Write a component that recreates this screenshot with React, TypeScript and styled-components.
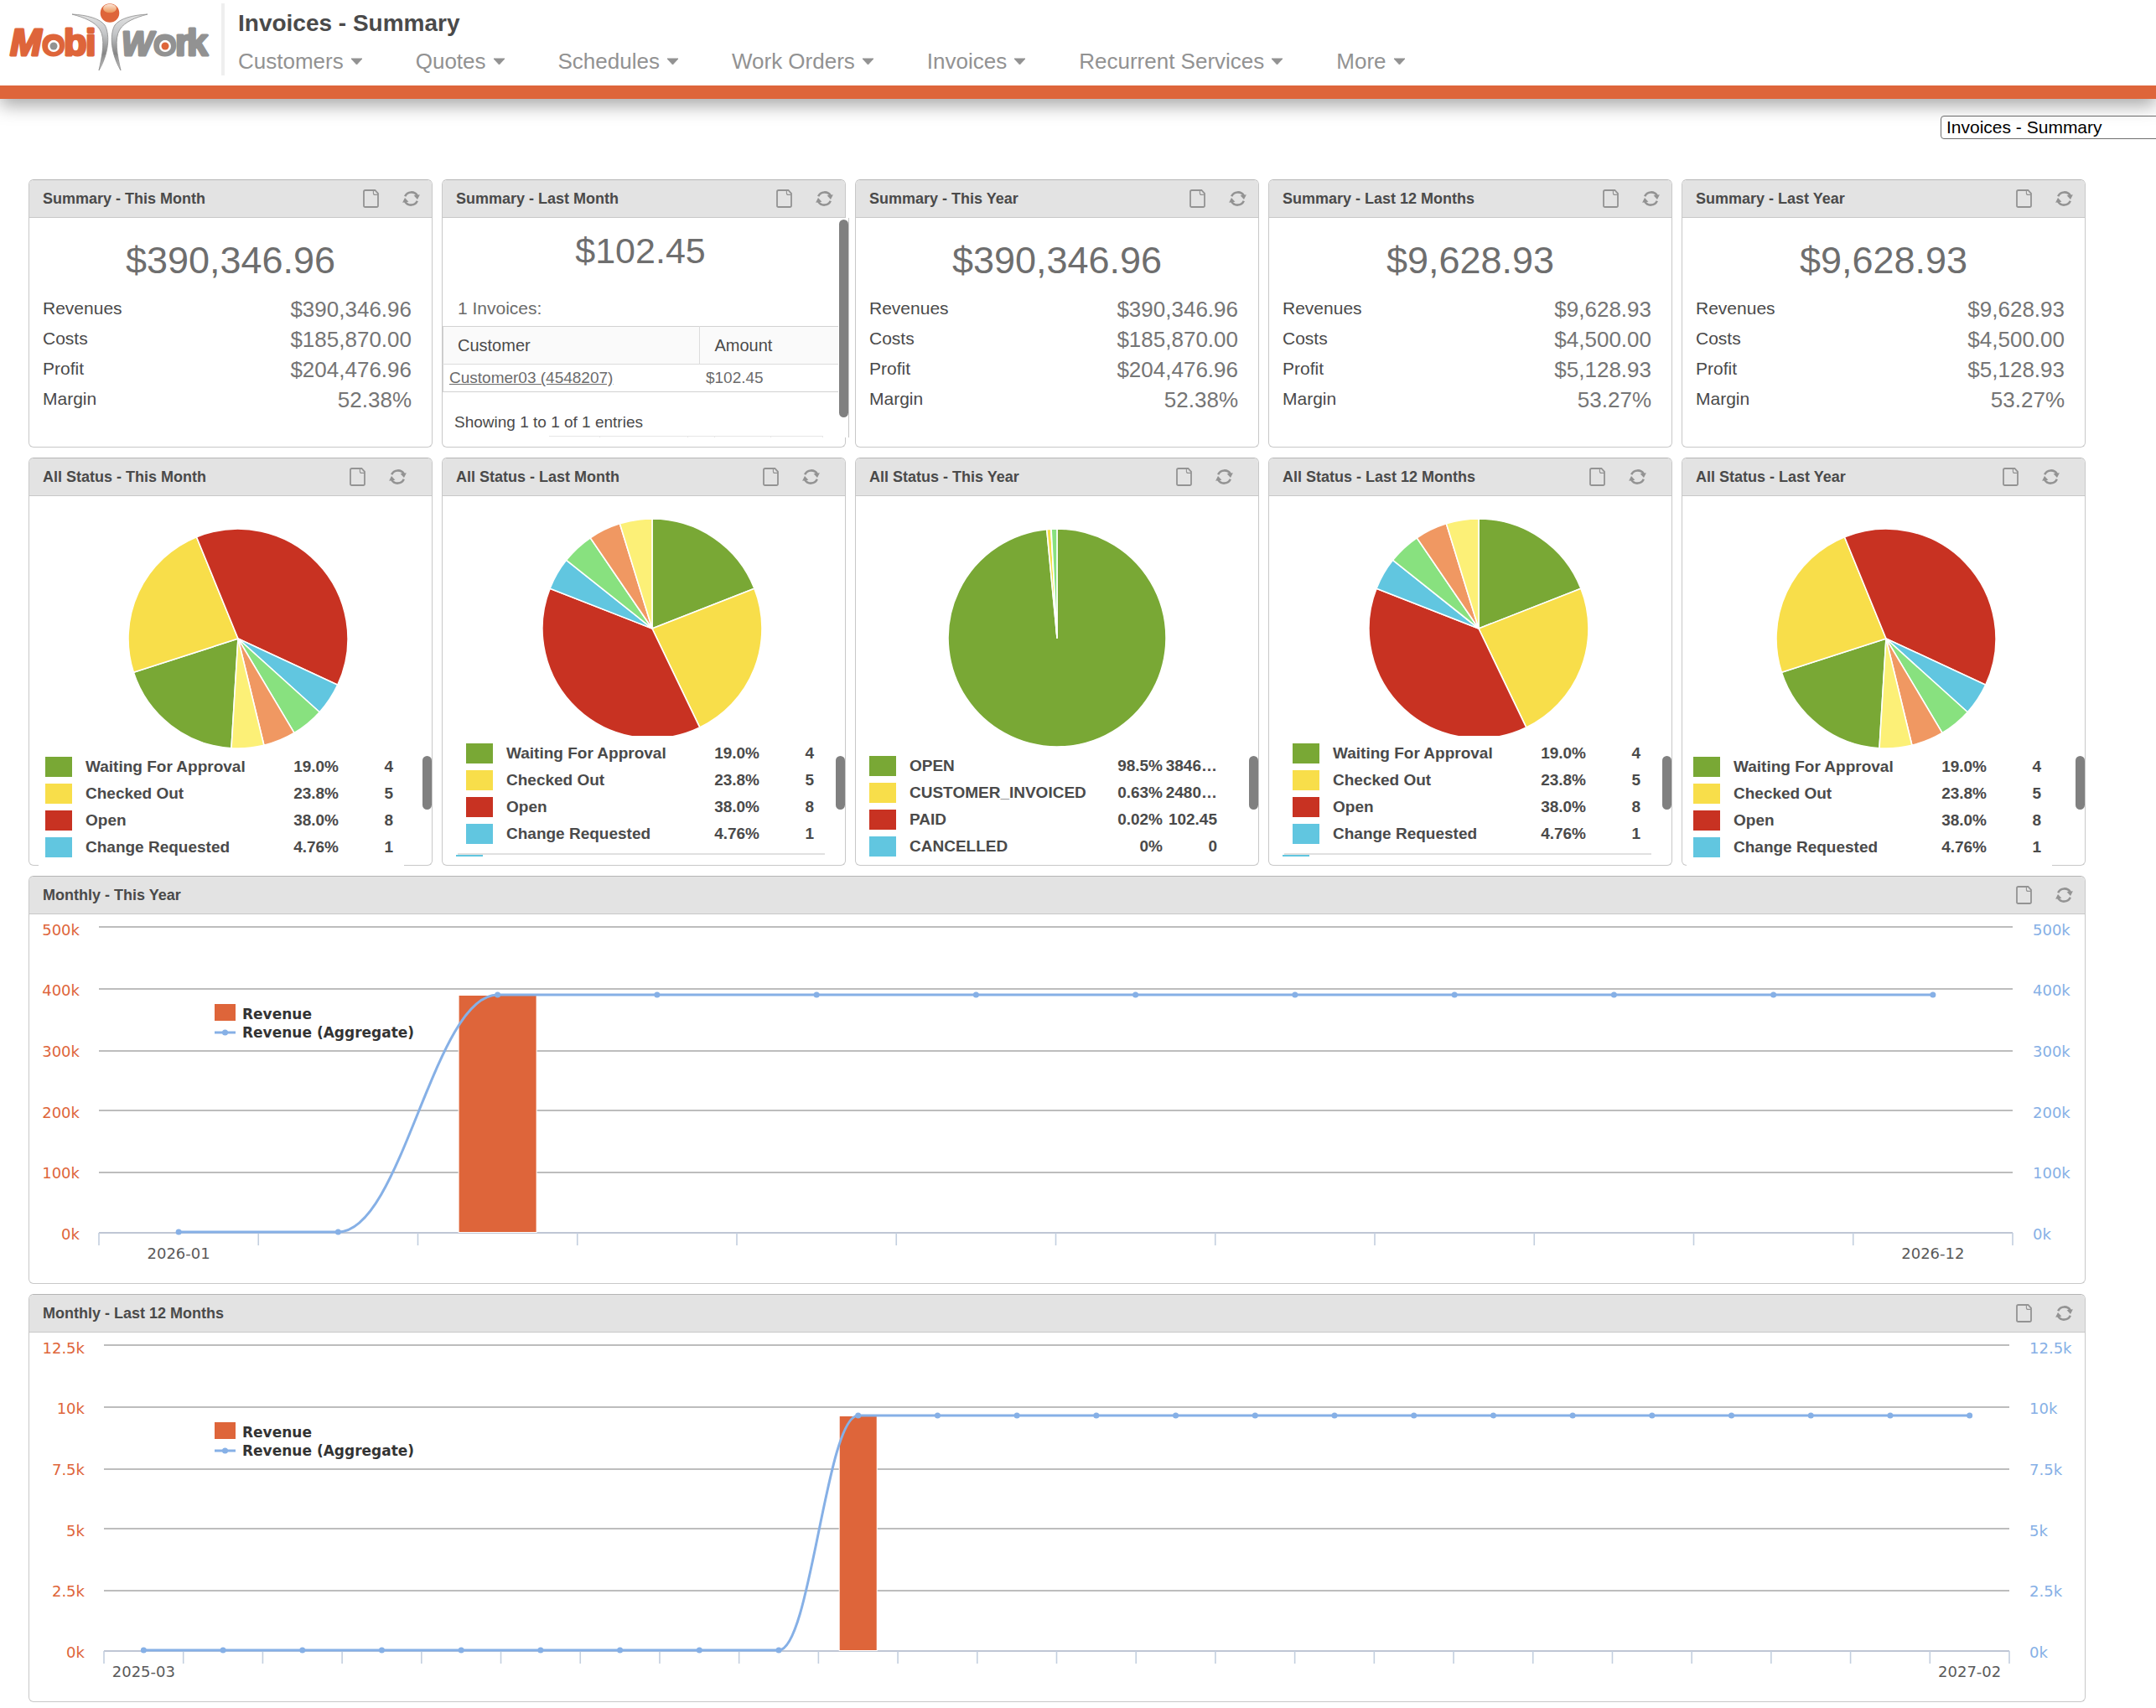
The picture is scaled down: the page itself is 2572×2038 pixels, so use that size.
import React from "react";
import styled, { createGlobalStyle } from "styled-components";

const ORANGE = "#de653a";
const BLUE = "#86b0e6";
const LINE = "#c8c8c8";

const GlobalStyle = createGlobalStyle`
  *, *::before, *::after { box-sizing: border-box; }
  body {
    margin: 0;
    overflow-x: hidden;
    background: #fff;
    color: #4a4a4a;
    font-family: "Liberation Sans", Arial, Helvetica, sans-serif;
  }
`;

/* ---------- header ---------- */

const Header = styled.header`
  position: relative;
  display: flex;
  height: 118px;
  background: #fff;
  border-bottom: 16px solid ${ORANGE};
  box-shadow: 0 8px 20px rgba(0, 0, 0, 0.34);
`;

const LogoLink = styled.a`
  display: block;
  width: 264px;
  flex: none;
`;

const Divider = styled.span`
  width: 4px;
  height: 86px;
  margin-top: 4px;
  background: #efefef;
`;

const HeaderText = styled.div`
  padding: 10px 0 0 16px;
`;

const PageTitle = styled.h1`
  margin: 0 0 9px;
  font-size: 28px;
  line-height: 36px;
  color: #4a4a4a;
`;

const Nav = styled.nav`
  display: flex;
  gap: 63px;
`;

const NavButton = styled.button`
  display: flex;
  align-items: center;
  gap: 8px;
  padding: 0;
  border: 0;
  background: none;
  font: inherit;
  font-size: 26px;
  line-height: 36px;
  color: #929292;
  white-space: nowrap;
`;

const Toolbar = styled.div`
  display: flex;
  justify-content: flex-end;
  padding-top: 20px;
  margin-right: -60px;
`;

const ReportSelect = styled.select`
  appearance: none;
  width: 317px;
  height: 28px;
  padding: 0 6px;
  border: 1px solid #6f6f6f;
  border-radius: 4px;
  background: #fff;
  font: inherit;
  font-size: 21px;
  line-height: 26px;
  color: #000;
`;

/* ---------- cards ---------- */

const Dashboard = styled.main`
  display: grid;
  grid-template-columns: repeat(5, minmax(0, 1fr));
  gap: 12px 11px;
  padding: 48px 84px 4px 34px;
`;

const Card = styled.section<{ $wide?: boolean }>`
  display: flex;
  flex-direction: column;
  grid-column: ${(p) => (p.$wide ? "1 / -1" : "auto")};
  border: 1px solid ${LINE};
  border-top-color: #b5b5b5;
  border-radius: 6px;
  background: #fff;
`;

const CardHeader = styled.header<{ $inset?: boolean }>`
  display: flex;
  align-items: center;
  height: 45px;
  padding: 0 ${(p) => (p.$inset ? 30 : 14)}px 0 16px;
  gap: 28px;
  border-bottom: 1px solid ${LINE};
  border-radius: 5px 5px 0 0;
  background: #e3e3e3;
`;

const CardTitle = styled.h2`
  flex: 1;
  margin: 0;
  font-size: 18px;
  line-height: 24px;
  color: #4a4a4a;
`;

const IconButton = styled.button`
  display: flex;
  padding: 0;
  border: 0;
  background: none;
`;

const SummaryBody = styled.div`
  padding: 25px 24px 38px 16px;
`;

const Total = styled.p`
  margin: 0 0 14px;
  padding-left: 8px;
  font-size: 45px;
  line-height: 52px;
  text-align: center;
  color: #6e6e6e;
`;

const Figures = styled.dl`
  margin: 0;
`;

const Figure = styled.div`
  display: flex;
  align-items: center;
  justify-content: space-between;
  height: 36px;
  dt {
    padding-bottom: 2px;
    font-size: 21px;
    line-height: 34px;
  }
  dd {
    margin: 0;
    font-size: 26px;
    line-height: 36px;
    color: #757575;
  }
`;

const DetailBody = styled.div`
  position: relative;
  height: 262px;
  margin-right: -5px;
  padding-right: 12px;
  border-right: 1px solid ${LINE};
  background: #fff;
  overflow: hidden;
`;

const DetailTotal = styled(Total)`
  margin: 0 0 20px;
  padding: 13px 0 0;
  font-size: 43px;
`;

const DetailCount = styled.p`
  margin: 0;
  padding: 5px 0 3px 18px;
  font-size: 21px;
  line-height: 36px;
  color: #6b6b6b;
`;

const DetailTable = styled.table`
  width: 100%;
  border-collapse: collapse;
  border: 1px solid #d2d2d2;
  border-right: 0;
  font-size: 19px;
  text-align: left;
  th {
    height: 45px;
    padding: 0 17px;
    border-bottom: 1px solid #dcdcdc;
    background: #fafafa;
    font-size: 20px;
    font-weight: 400;
  }
  th + th {
    border-left: 1px solid #dcdcdc;
  }
  td {
    height: 33px;
    padding: 0 7px;
    color: #6b6b6b;
  }
`;

const CustomerLink = styled.a`
  color: inherit;
  text-decoration: underline;
`;

const Entries = styled.p`
  margin: 0;
  padding: 24px 0 4px 14px;
  font-size: 19px;
  line-height: 24px;
`;

const Pager = styled.div`
  display: grid;
  grid-template-columns: 61px 105px 32px 67px 62px;
  justify-content: end;
  padding-right: 18px;
  span {
    height: 20px;
    border: 1px solid #e6e6e6;
    border-left-width: 0;
  }
`;

const ScrollThumb = styled.span<{ $top: number; $length: number }>`
  position: absolute;
  top: ${(p) => p.$top}px;
  right: 0;
  width: 11px;
  height: ${(p) => p.$length}px;
  border-radius: 6px;
  background: #808080;
`;

/* ---------- status cards ---------- */

const StatusBody = styled.div`
  position: relative;
  padding-bottom: 5px;
`;

const PieArea = styled.div<{ $height: number; $left: number }>`
  display: flex;
  align-items: flex-end;
  height: ${(p) => p.$height}px;
  padding: 0 0 5px ${(p) => p.$left}px;
  svg { display: block; }
`;

const Legend = styled.ul<{ $left: number }>`
  margin: 0 0 0 ${(p) => p.$left}px;
  padding: 0;
  list-style: none;
`;

const LegendRow = styled.li`
  display: grid;
  grid-template-columns: 32px 254px 64px 65px;
  align-items: center;
  height: 32px;
  font-size: 19px;
  font-weight: 700;
  white-space: nowrap;
`;

const Swatch = styled.span<{ $color: string }>`
  height: 24px;
  background: ${(p) => p.$color};
`;

const LegendName = styled.span`
  padding-left: 16px;
`;

const LegendNumber = styled.span`
  text-align: right;
`;

const LegendEnd = styled.div`
  width: 438px;
  margin: 7px 0 0 18px;
  border-top: 2px solid #e0e0e0;
`;

const NextSwatch = styled.div`
  width: 32px;
  height: 2px;
  margin: 0 0 5px 16px;
  background: #61c6e0;
`;

const FooterCover = styled.span<{ $left: number }>`
  position: absolute;
  left: ${(p) => p.$left}px;
  bottom: -1px;
  width: 436px;
  height: 4px;
  background: #fff;
`;

const ChartSvg = styled.svg`
  display: block;
  width: 100%;
  height: auto;
  font-family: "DejaVu Sans", Verdana, sans-serif;
  font-size: 18px;
`;

/* ---------- drawings ---------- */

const arm =
  "M86 17 C104 18 119 22 125 30 C130 38 132 60 118 84 C122 66 126 46 119 35 C113 26 101 21 86 17 Z";

function Logo() {
  return (
    <svg width="264" height="100" viewBox="0 0 264 100" role="img" aria-label="MobiWork">
      <defs>
        <linearGradient id="body" x1="0" y1="0" x2="0" y2="1">
          <stop offset="0" stopColor="#e2e2e2" />
          <stop offset="0.35" stopColor="#c4c6c8" />
          <stop offset="0.7" stopColor="#868686" />
          <stop offset="1" stopColor="#c8c8c8" />
        </linearGradient>
        <linearGradient id="shine" x1="0" y1="0" x2="0" y2="1">
          <stop offset="0" stopColor="#fbe6d8" />
          <stop offset="1" stopColor="#eb9455" />
        </linearGradient>
      </defs>
      <g
        fontFamily="Liberation Sans, Arial, sans-serif"
        fontWeight="700"
        fontSize="45"
        strokeWidth="3"
        strokeLinejoin="round"
      >
        <text y="66" x="12 50 76 102" fill={ORANGE} stroke={ORANGE}>
          <tspan fontStyle="italic">M</tspan>obi
        </text>
        <g fill="#929292" stroke="#929292">
          <text y="66" x="145" fontStyle="italic" fontSize="40">W</text>
          <text y="66" x="183 209 223">ork</text>
        </g>
      </g>
      <circle cx="64" cy="55" r="7" fill="#fff" />
      <circle cx="64" cy="55" r="4.5" fill="#929292" />
      <circle cx="197" cy="55" r="7" fill="#fff" />
      <circle cx="197" cy="55" r="4.5" fill={ORANGE} />
      <path d={arm} fill="url(#body)" stroke="#8a8a8a" strokeWidth="0.8" />
      <path d={arm} fill="url(#body)" stroke="#8a8a8a" strokeWidth="0.8" transform="translate(262 0) scale(-1 1)" />
      <circle cx="131" cy="15.5" r="11.3" fill={ORANGE} />
      <ellipse cx="131" cy="10" rx="8" ry="5.3" fill="url(#shine)" />
    </svg>
  );
}

const Caret = () => (
  <svg width="15" height="9" viewBox="0 0 15 9" aria-hidden="true">
    <path d="M1 1 H14 L7.5 8 Z" fill="#929292" stroke="#929292" strokeLinejoin="round" />
  </svg>
);

const FileIcon = () => (
  <svg width="19" height="22" viewBox="0 0 19 22" fill="none" stroke="#939393" aria-hidden="true">
    <path
      d="M2.8 1 H14.4 L18 4.8 V19.2 Q18 21 16.2 21 H2.8 Q1 21 1 19.2 V2.8 Q1 1 2.8 1 Z"
      strokeWidth="1.8"
    />
    <path d="M12.4 1.2 V4.4 Q12.4 6.4 14.4 6.4 H17.8" strokeWidth="1.1" />
  </svg>
);

const RefreshIcon = () => (
  <svg width="21" height="20" viewBox="0 0 21 20" aria-hidden="true">
    <path d="M3.2 7.2 A8.3 8.3 0 0 1 17.8 6.4" fill="none" stroke="#939393" strokeWidth="2.6" />
    <path d="M17.8 12.8 A8.3 8.3 0 0 1 3.2 13.6" fill="none" stroke="#939393" strokeWidth="2.6" />
    <path d="M13.6 6.2 L20.9 5.2 L18 11 Z M7.4 13.8 L0.1 14.8 L3 9 Z" fill="#939393" />
  </svg>
);

function point(r: number, c: number, deg: number) {
  const a = (deg * Math.PI) / 180;
  return `${(c + r * Math.sin(a)).toFixed(2)} ${(c - r * Math.cos(a)).toFixed(2)}`;
}

interface Slice { value: number; color: string }

function Pie({ slices, start, radius, height }: { slices: Slice[]; start: number; radius: number; height: number }) {
  const total = slices.reduce((s, x) => s + x.value, 0);
  let angle = start;
  return (
    <svg width="264" height={height} viewBox={`0 0 264 ${height}`} role="img" aria-label="Status breakdown">
      {slices.map((s) => {
        const from = angle;
        const sweep = (s.value / total) * 360;
        angle += sweep;
        return (
          <path
            key={s.color}
            d={`M132 132 L${point(radius, 132, from)} A${radius} ${radius} 0 ${sweep > 180 ? 1 : 0} 1 ${point(radius, 132, angle)} Z`}
            fill={s.color}
            stroke="#fff"
            strokeWidth="1.6"
            strokeLinejoin="round"
          />
        );
      })}
    </svg>
  );
}

/* ---------- data ---------- */

const GREEN = "#79a835";
const YELLOW = "#f8de4a";
const RED = "#c83222";
const CYAN = "#61c6e0";
const MINT = "#88e17f";
const PEACH = "#f09862";
const LEMON = "#fcf077";

const menu = ["Customers", "Quotes", "Schedules", "Work Orders", "Invoices", "Recurrent Services", "More"];

const current = ["$390,346.96", "$185,870.00", "$204,476.96", "52.38%"];
const previous = ["$9,628.93", "$4,500.00", "$5,128.93", "53.27%"];
const labels = ["Revenues", "Costs", "Profit", "Margin"];

const statusSlices: Slice[] = [
  { value: 4, color: GREEN },
  { value: 5, color: YELLOW },
  { value: 8, color: RED },
  { value: 1, color: CYAN },
  { value: 1, color: MINT },
  { value: 1, color: PEACH },
  { value: 1, color: LEMON },
];

const yearSlices: Slice[] = [
  { value: 98.5, color: GREEN },
  { value: 0.63, color: YELLOW },
  { value: 0.02, color: RED },
  { value: 0.85, color: MINT },
];

type Row = [string, string, string, string];

const statusRows: Row[] = [
  [GREEN, "Waiting For Approval", "19.0%", "4"],
  [YELLOW, "Checked Out", "23.8%", "5"],
  [RED, "Open", "38.0%", "8"],
  [CYAN, "Change Requested", "4.76%", "1"],
];

const yearRows: Row[] = [
  [GREEN, "OPEN", "98.5%", "3846…"],
  [YELLOW, "CUSTOMER_INVOICED", "0.63%", "2480…"],
  [RED, "PAID", "0.02%", "102.45"],
  [CYAN, "CANCELLED", "0%", "0"],
];

/* ---------- parts ---------- */

function Heading({ title, inset }: { title: string; inset?: boolean }) {
  return (
    <CardHeader $inset={inset}>
      <CardTitle>{title}</CardTitle>
      <IconButton type="button" aria-label={`Export ${title}`}><FileIcon /></IconButton>
      <IconButton type="button" aria-label={`Refresh ${title}`}><RefreshIcon /></IconButton>
    </CardHeader>
  );
}

function SummaryCard({ title, values }: { title: string; values: string[] }) {
  return (
    <Card>
      <Heading title={title} />
      <SummaryBody>
        <Total>{values[0]}</Total>
        <Figures>
          {labels.map((label, i) => (
            <Figure key={label}>
              <dt>{label}</dt>
              <dd>{values[i]}</dd>
            </Figure>
          ))}
        </Figures>
      </SummaryBody>
    </Card>
  );
}

function InvoiceListCard() {
  return (
    <Card>
      <Heading title="Summary - Last Month" />
      <DetailBody>
        <DetailTotal>$102.45</DetailTotal>
        <DetailCount>1 Invoices:</DetailCount>
        <DetailTable>
          <colgroup>
            <col width="65%" />
            <col />
          </colgroup>
          <thead>
            <tr><th>Customer</th><th>Amount</th></tr>
          </thead>
          <tbody>
            <tr>
              <td><CustomerLink href="#customer">Customer03 (4548207)</CustomerLink></td>
              <td>$102.45</td>
            </tr>
          </tbody>
        </DetailTable>
        <Entries>Showing 1 to 1 of 1 entries</Entries>
        <Pager><span /><span /><span /><span /><span /></Pager>
        <ScrollThumb $top={2} $length={236} />
      </DetailBody>
    </Card>
  );
}

interface StatusProps {
  title: string;
  slices: Slice[];
  rows: Row[];
  start: number;
  radius: number;
  area: number;
  pieHeight: number;
  pieLeft: number;
  left: number;
  ending?: "line" | "cover";
}

function StatusCard(p: StatusProps) {
  return (
    <Card>
      <Heading title={p.title} inset />
      <StatusBody>
        <PieArea $height={p.area} $left={p.pieLeft}>
          <Pie slices={p.slices} start={p.start} radius={p.radius} height={p.pieHeight} />
        </PieArea>
        <Legend $left={p.left}>
          {p.rows.map(([color, name, share, amount]) => (
            <LegendRow key={name}>
              <Swatch $color={color} />
              <LegendName>{name}</LegendName>
              <LegendNumber>{share}</LegendNumber>
              <LegendNumber>{amount}</LegendNumber>
            </LegendRow>
          ))}
        </Legend>
        {p.ending === "line" && (<><LegendEnd /><NextSwatch /></>)}
        {p.ending === "cover" && <FooterCover $left={p.left - 8} />}
        <ScrollThumb $top={310} $length={64} />
      </StatusBody>
    </Card>
  );
}

interface MonthlyProps {
  title: string;
  ticks: string[];
  left: number;
  right: number;
  count: number;
  peak: number;
  peakY: number;
  barWidth: number;
  first: string;
  last: string;
}

const gridY = [15, 89, 163, 234, 308, 380];
const labelY = [25, 97, 170, 243, 315, 388];

function MonthlyCard(p: MonthlyProps) {
  const step = (p.right - p.left) / p.count;
  const x = (i: number) => p.left + step * (i + 0.5);
  const base = 379;
  const a = x(p.peak - 1);
  const b = x(p.peak);
  const months = Array.from({ length: p.count }, (_, i) => i);
  return (
    <Card $wide>
      <Heading title={p.title} />
      <ChartSvg viewBox="0 0 2452 440" role="img" aria-label={p.title}>
        {gridY.slice(0, 5).map((y) => (
          <path key={y} d={`M${p.left} ${y} H${p.right}`} stroke="#bdbdbd" strokeWidth="2" />
        ))}
        <path d={`M${p.left} 380 H${p.right}`} stroke="#bfc6d4" strokeWidth="2" />
        {Array.from({ length: p.count + 1 }, (_, i) => (
          <path key={i} d={`M${p.left + step * i} 380 V395`} stroke="#c3cfdf" strokeWidth="1.6" />
        ))}
        <rect
          x={b - p.barWidth / 2}
          y={p.peakY + 1}
          width={p.barWidth}
          height={base - p.peakY - 1}
          fill={ORANGE}
          stroke="#fff"
          strokeWidth="2"
          paintOrder="stroke"
        />
        <path
          d={`M${x(0)} ${base} H${a} C${a + step * 0.4} ${base} ${b - step * 0.4} ${p.peakY} ${b} ${p.peakY} H${x(p.count - 1)}`}
          fill="none"
          stroke={BLUE}
          strokeWidth="3"
        />
        {months.map((i) => (
          <circle key={i} cx={x(i)} cy={i < p.peak ? base : p.peakY} r="3.5" fill={BLUE} />
        ))}
        {p.ticks.map((t, i) => (
          <g key={t}>
            <text x={p.left - 23} y={labelY[i]} textAnchor="end" fill={ORANGE}>{t}</text>
            <text x={p.right + 24} y={labelY[i]} fill={BLUE}>{t}</text>
          </g>
        ))}
        <g fill="#5a5a5a" textAnchor="middle">
          <text x={x(0)} y="411">{p.first}</text>
          <text x={x(p.count - 1)} y="411">{p.last}</text>
        </g>
        <rect x="221" y="107" width="25" height="20" fill={ORANGE} />
        <path d="M221 141 H246" stroke={BLUE} strokeWidth="3" />
        <circle cx="233.5" cy="141" r="3.5" fill={BLUE} />
        <g fontSize="17" fontWeight="700" fill="#333">
          <text x="254" y="125">Revenue</text>
          <text x="254" y="147">Revenue (Aggregate)</text>
        </g>
      </ChartSvg>
    </Card>
  );
}

export default function App() {
  const turned = { slices: statusSlices, rows: statusRows, start: 183.5, radius: 131, area: 307, pieHeight: 264 };
  const upright = {
    slices: statusSlices, rows: statusRows, start: 0, radius: 131, area: 291, pieHeight: 260, pieLeft: 118, left: 28,
  };
  return (
    <>
      <GlobalStyle />
      <Header>
        <LogoLink href="#home"><Logo /></LogoLink>
        <Divider />
        <HeaderText>
          <PageTitle>Invoices - Summary</PageTitle>
          <Nav>
            {menu.map((m) => (
              <NavButton key={m} type="button">{m}<Caret /></NavButton>
            ))}
          </Nav>
        </HeaderText>
      </Header>
      <Toolbar>
        <ReportSelect aria-label="Report">
          <option>Invoices - Summary</option>
        </ReportSelect>
      </Toolbar>
      <Dashboard>
        <SummaryCard title="Summary - This Month" values={current} />
        <InvoiceListCard />
        <SummaryCard title="Summary - This Year" values={current} />
        <SummaryCard title="Summary - Last 12 Months" values={previous} />
        <SummaryCard title="Summary - Last Year" values={previous} />

        <StatusCard title="All Status - This Month" {...turned} pieLeft={117} left={19} ending="cover" />
        <StatusCard title="All Status - Last Month" {...upright} ending="line" />
        <StatusCard
          title="All Status - This Year"
          slices={yearSlices}
          rows={yearRows}
          start={0}
          radius={130}
          area={306}
          pieHeight={264}
          pieLeft={108}
          left={16}
        />
        <StatusCard title="All Status - Last 12 Months" {...upright} ending="line" />
        <StatusCard title="All Status - Last Year" {...turned} pieLeft={111} left={13} ending="cover" />

        <MonthlyCard
          title="Monthly - This Year"
          ticks={["500k", "400k", "300k", "200k", "100k", "0k"]}
          left={83}
          right={2366}
          count={12}
          peak={2}
          peakY={96}
          barWidth={92}
          first="2026-01"
          last="2026-12"
        />
        <MonthlyCard
          title="Monthly - Last 12 Months"
          ticks={["12.5k", "10k", "7.5k", "5k", "2.5k", "0k"]}
          left={89}
          right={2362}
          count={24}
          peak={9}
          peakY={99}
          barWidth={44}
          first="2025-03"
          last="2027-02"
        />
      </Dashboard>
    </>
  );
}
